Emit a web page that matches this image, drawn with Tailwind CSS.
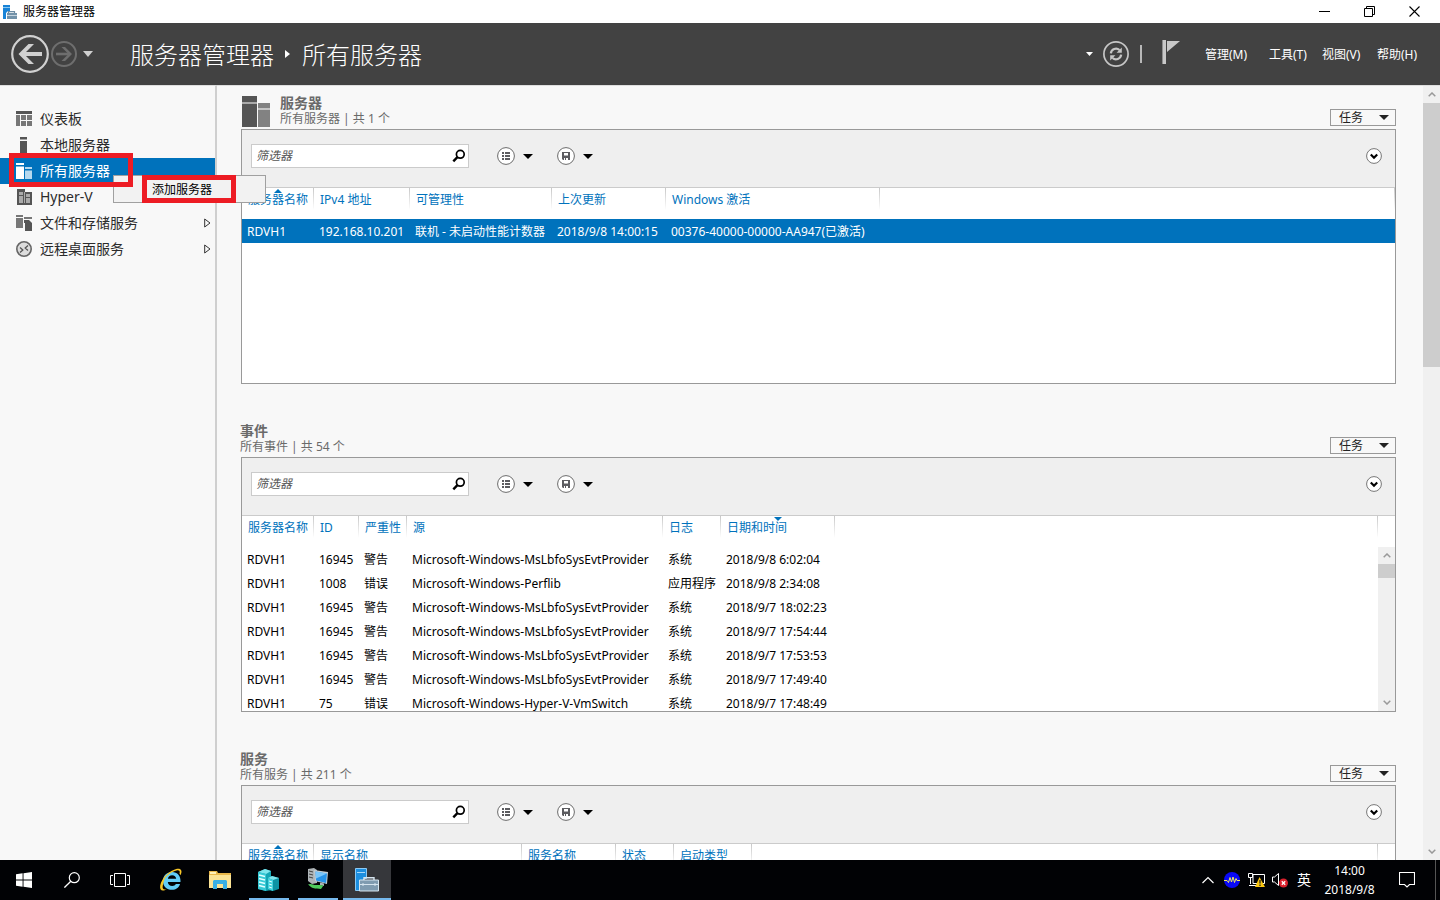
<!DOCTYPE html>
<html lang="zh-CN">
<head>
<meta charset="utf-8">
<title>服务器管理器</title>
<script src="https://cdn.jsdelivr.net/npm/@tailwindcss/browser@4"></script>
</head>
<body class="flex h-screen flex-col overflow-hidden bg-white font-['Noto_Sans','Noto_Sans_CJK_SC',sans-serif] text-xs leading-4 text-black">

<!-- Shared icons -->
<svg class="hidden">
  <symbol id="caret" viewBox="0 0 10 5"><path d="M0 0h10L5 5z" fill="currentColor"/></symbol>
  <symbol id="lens" viewBox="0 0 14 14"><circle cx="8.3" cy="5.3" r="3.9" fill="none" stroke="#000" stroke-width="1.7"/><path d="M5.4 8.2 1.3 12.4" stroke="#000" stroke-width="2.4"/></symbol>
  <symbol id="list" viewBox="0 0 18 18"><circle cx="9" cy="9" r="8.4" fill="#fff" stroke="#6b6b6b"/><path d="M5 5h2v2H5zM8 5h5v2H8zM5 8h2v2H5zM8 8h5v2H8zM5 11h2v2H5zM8 11h5v2H8z" fill="#5c5c60"/></symbol>
  <symbol id="disk" viewBox="0 0 18 18"><circle cx="9" cy="9" r="8.4" fill="#fff" stroke="#6b6b6b"/><path d="M5 5h8v8H6l-1-1z" fill="#5c5c60"/><path d="M7 6h4v2.500H7zM7 11h1v2H7zM9 11h2v2H9z" fill="#fff"/></symbol>
  <symbol id="expand" viewBox="0 0 16 16"><circle cx="8" cy="8" r="7.400" fill="#fff" stroke="#777"/><path d="M4.800 6.500 8 9.700l3.200-3.200" fill="none" stroke="#000" stroke-width="2.200"/></symbol>
  <symbol id="up" viewBox="0 0 8 5"><path d="M.7 4.300 4 1l3.300 3.300" fill="none" stroke="#999" stroke-width="1.500"/></symbol>
  <symbol id="down" viewBox="0 0 8 5"><path d="M.7.7 4 4 7.300.7" fill="none" stroke="#999" stroke-width="1.500"/></symbol>
  <symbol id="manager" viewBox="0 0 24 24"><path d="M.5.500h11v10h-2l-3 3v9h-6z" fill="#1d8fe0" stroke="#8ccaf5"/><path d="M2 4.500h8" stroke="#a9dafb"/><path d="M9 12V9.800h10V12" fill="none" stroke="#d6e4ee" stroke-width="1.400"/><path d="M4.500 12h19v11h-19z" fill="#7f9bb0" stroke="#d6e4ee"/><path d="M5 16.500h18M8 15v3M20 15v3" stroke="#d6e4ee"/></symbol>
</svg>

<header>
  <div class="flex h-[23px] items-center pl-[3px] pr-[3px]">
    <svg class="h-[14px] w-[14px]" viewBox="0 0 14 14"><path d="M0 0h7v6H5L3 8v6H0z" fill="#1883d7"/><path d="M0 2.500h7" stroke="#8cc8f2"/><path d="M5.500 8.500V6.600h6v1.900" fill="none" stroke="#6c8ba3" stroke-width="1.200"/><path d="M4 8h10v6H4z" fill="#7292a9"/><path d="M4 10.500h10" stroke="#c4d3de"/></svg>
    <h1 class="ml-[6px] flex-1">服务器管理器</h1>
    <button aria-label="最小化" class="flex h-[21px] w-[45px] items-center justify-center"><svg class="h-[11px] w-[11px]" viewBox="0 0 11 11"><path d="M0 5.500h11" stroke="#000"/></svg></button>
    <button aria-label="还原" class="flex h-[21px] w-[45px] items-center justify-center"><svg class="h-[11px] w-[11px]" viewBox="0 0 11 11"><path d="M.5 2.500h8v8h-8zM2.500 2V.500h8v8H9" fill="none" stroke="#000"/></svg></button>
    <button aria-label="关闭" class="flex h-[21px] w-[45px] items-center justify-center"><svg class="h-[11px] w-[11px]" viewBox="0 0 11 11"><path d="m.5.500 10 10m0-10-10 10" stroke="#000" stroke-width="1.100"/></svg></button>
  </div>
  <div class="flex h-[62px] items-center bg-[#424242] pl-[11px] pr-[21px] text-white">
    <button aria-label="后退"><svg class="h-[38px] w-[38px]" viewBox="0 0 38 38"><circle cx="19" cy="19" r="17.800" fill="none" stroke="#d0d0d0" stroke-width="2.200"/><path d="M31 19H10" stroke="#d0d0d0" stroke-width="4"/><path d="M23 9h-5.500L7.500 19l10 10H23L13 19z" fill="#d0d0d0"/></svg></button>
    <button aria-label="前进" class="ml-[2px]"><svg class="h-[26px] w-[26px]" viewBox="0 0 26 26"><circle cx="13" cy="13" r="12" fill="none" stroke="#6e6e6e" stroke-width="2"/><path d="M5 13h14" stroke="#6e6e6e" stroke-width="2.600"/><path d="M10.500 6H14l7 7-7 7h-3.500l7-7z" fill="#6e6e6e"/></svg></button>
    <button aria-label="历史记录" class="ml-[6px] text-[#d0d0d0]"><svg class="h-[6px] w-[10px]" viewBox="0 0 10 5" preserveAspectRatio="none"><path d="M0 0h10L5 5z" fill="currentColor"/></svg></button>
    <nav class="ml-[37px] flex flex-1 items-center pt-[2px] text-2xl font-light leading-8">
      <a href="#">服务器管理器</a>
      <svg class="ml-[11px] mr-[12px] mb-[2px] h-[8px] w-[5px]" viewBox="0 0 5 8"><path d="M0 0l5 4-5 4z" fill="#fff"/></svg>
      <span>所有服务器</span>
    </nav>
    <button aria-label="通知列表"><svg class="h-[4px] w-[7px]" viewBox="0 0 7 4"><path d="M0 0h7L3.500 4z" fill="#fff"/></svg></button>
    <button aria-label="刷新" class="ml-[10px]"><svg class="h-[26px] w-[26px]" viewBox="0 0 26 26"><circle cx="13" cy="13" r="12.100" fill="none" stroke="#c6c6c6" stroke-width="1.700"/><path d="M7.800 12.300a5.300 5.300 0 0 1 8.700-3.300M18.200 13.700a5.300 5.300 0 0 1-8.700 3.300" fill="none" stroke="#c6c6c6" stroke-width="2.200"/><path d="M18.800 6.500v5.200h-5.200zM7.200 19.500v-5.200h5.200z" fill="#c6c6c6"/></svg></button>
    <span class="ml-[11px] h-[18px] w-[2px] bg-[#b8b8b8]"></span>
    <button aria-label="通知" class="ml-[20px] mb-[4px]"><svg class="h-[24px] w-[18px]" viewBox="0 0 18 24"><path d="M0 0h4v24H0zM5 1h13L5 12z" fill="#c8c8c8"/><path d="M.5 0v24" stroke="#8e8e8e"/></svg></button>
    <div class="ml-[25px] flex pt-[2px]">
      <button class="w-[64px] text-left">管理(M)</button>
      <button class="w-[53px] text-left">工具(T)</button>
      <button class="w-[55px] text-left">视图(V)</button>
      <button class="w-[42px] whitespace-nowrap text-left">帮助(H)</button>
    </div>
  </div>
</header>

<div class="flex min-h-0 flex-1 bg-[#f8f8f8]">
  <aside class="relative w-[217px] shrink-0 border-r-2 border-t border-r-[#cfcfcf] border-t-[#dedede] pt-[20px] text-sm text-[#2b2b2b]">
    <nav>
      <a href="#" class="flex h-[26px] items-center gap-2 pl-4"><svg class="h-4 w-4" viewBox="0 0 16 16"><path d="M0 0h16v3H0z" fill="#555"/><path d="M0 4h4v11H0zM5 4h5v5H5zM11 4h5v5h-5zM5 10h5v5H5zM11 10h5v5h-5z" fill="#777"/></svg>仪表板</a>
      <a href="#" class="flex h-[26px] items-center gap-2 pl-4"><svg class="h-4 w-4" viewBox="0 0 16 16"><path d="M4 0h7v2.500H4zM4 4h7v12H4z" fill="#555"/></svg>本地服务器</a>
      <a href="#" class="flex h-[26px] items-center gap-2 bg-[#0072bc] pl-4 text-white"><svg class="h-4 w-4" viewBox="0 0 16 16"><path d="M0 0h8v2H0zM0 3.500h8V16H0z" fill="#fff"/><path d="M9 4h7v2H9zM9 7.500h7V16H9z" fill="#b5d8ee"/></svg>所有服务器</a>
      <a href="#" class="flex h-[26px] items-center gap-2 pl-4"><svg class="h-4 w-4" viewBox="0 0 16 16"><path d="M1 0h8v3h7v13H1z" fill="#555"/><path d="M3 3h4v3H3zM3 7h4v7H3zM10 5h4v3h-4zM10 9h4v5h-4zM8 3h1v11H8z" fill="#aaa"/></svg>Hyper-V</a>
      <a href="#" class="flex h-[26px] items-center gap-2 pl-4 pr-[4px]"><svg class="h-4 w-4" viewBox="0 0 16 16"><path d="M0 0h7v2H0zM0 3h7v10H0zM8 2h8v2H8z" fill="#777"/><path d="M8 5h8v11H9V8H8z" fill="#555"/><path d="M13 5h3v3z" fill="#f8f8f8"/></svg><span class="flex-1">文件和存储服务</span><svg class="h-[10px] w-[7px]" viewBox="0 0 7 10"><path d="M.7 1v8L6 5z" fill="none" stroke="#333"/></svg></a>
      <a href="#" class="flex h-[26px] items-center gap-2 pl-4 pr-[4px]"><svg class="h-4 w-4" viewBox="0 0 16 16"><circle cx="8" cy="8" r="7.200" fill="#ddd" stroke="#666" stroke-width="1.600"/><path d="m4 6.500 2.800 2.500L4 11.500M12 4.500 9.200 7l2.800 2.500" fill="none" stroke="#555" stroke-width="1.300"/></svg><span class="flex-1">远程桌面服务</span><svg class="h-[10px] w-[7px]" viewBox="0 0 7 10"><path d="M.7 1v8L6 5z" fill="none" stroke="#333"/></svg></a>
    </nav>
    <!-- Context menu and highlight frames -->
    <div class="absolute left-[113px] top-[89px] z-10 h-[28px] w-[153px] border border-[#a0a0a0] bg-[#f2f2f2] text-xs text-black">
      <button class="flex h-full w-full items-center pl-[38px] pt-[2px]">添加服务器</button>
    </div>
    <div class="pointer-events-none absolute left-[142px] top-[89px] z-20 h-[28px] w-[94px] border-5 border-[#ed1c24]"></div>
    <div class="pointer-events-none absolute left-[9px] top-[67px] z-20 h-[34px] w-[124px] border-5 border-[#ed1c24]"></div>
  </aside>

  <main class="min-w-0 flex-1 overflow-hidden border-t border-[#dedede] pl-6 pr-[27px]">
    <!-- Servers -->
    <section class="mb-[29px]">
      <div class="flex h-[43px] items-end pb-[2px]">
        <svg class="mr-[10px] ml-[1px] h-[31px] w-[28px]" viewBox="0 0 28 31"><path d="M0 0h15v31H0z" fill="#555"/><path d="M0 6h15v2H0z" fill="#aaa"/><path d="M16 7h12v24H16z" fill="#828282"/><path d="M16 12h12v2H16z" fill="#c4c4c4"/></svg>
        <div class="flex-1 text-[#6a6a6a]"><h2 class="text-sm font-bold leading-[17px]">服务器</h2><p>所有服务器 | 共 1 个</p></div>
        <button class="mb-px flex h-[17px] w-[66px] items-center justify-between border border-[#999] pl-[8px] pr-[6px] text-[#222]">任务<svg class="h-[5px] w-[10px]"><use href="#caret"/></svg></button>
      </div>
      <div class="h-[255px] overflow-hidden border border-[#999] bg-white">
        <div class="flex h-[58px] items-start border-b border-[#cbcbcb] bg-[#efefef] pl-[9px] pr-[13px] pt-[14px]">
          <label class="flex h-6 w-[218px] items-center border border-[#cbcbcb] bg-white pl-1 pr-[2px]"><input type="text" aria-label="筛选器" placeholder="筛选器" class="w-full min-w-0 flex-1 italic outline-none placeholder:text-[#555]"><svg class="h-[14px] w-[14px]"><use href="#lens"/></svg></label>
          <div class="ml-[28px] flex h-6 flex-1 items-center">
            <button aria-label="视图选项" class="flex items-center gap-2"><svg class="h-[18px] w-[18px]"><use href="#list"/></svg><svg class="h-[5px] w-[10px]"><use href="#caret"/></svg></button>
            <button aria-label="保存查询" class="ml-6 flex items-center gap-2"><svg class="h-[18px] w-[18px]"><use href="#disk"/></svg><svg class="h-[5px] w-[10px]"><use href="#caret"/></svg></button>
          </div>
          <button aria-label="展开" class="flex h-6 items-center"><svg class="h-4 w-4"><use href="#expand"/></svg></button>
        </div>
        <table class="w-full table-fixed border-collapse whitespace-nowrap text-left">
          <colgroup><col class="w-[72px]"><col class="w-[96px]"><col class="w-[142px]"><col class="w-[114px]"><col class="w-[214px]"><col></colgroup>
          <thead><tr class="h-[31px] align-top text-[#0072bc]">
            <th class="relative bg-linear-to-b from-[#c8c8c8] to-white bg-[length:1px_22px] bg-right-top bg-no-repeat pl-[6px] pt-1 font-normal">服务器名称<svg class="absolute left-[32px] top-[1px] h-[4px] w-[8px]" viewBox="0 0 8 4"><path d="M0 4h8L4 0z" fill="#0072bc"/></svg></th>
            <th class="bg-linear-to-b from-[#c8c8c8] to-white bg-[length:1px_22px] bg-right-top bg-no-repeat pl-[6px] pt-1 font-normal">IPv4 地址</th>
            <th class="bg-linear-to-b from-[#c8c8c8] to-white bg-[length:1px_22px] bg-right-top bg-no-repeat pl-[6px] pt-1 font-normal">可管理性</th>
            <th class="bg-linear-to-b from-[#c8c8c8] to-white bg-[length:1px_22px] bg-right-top bg-no-repeat pl-[6px] pt-1 font-normal">上次更新</th>
            <th class="bg-linear-to-b from-[#c8c8c8] to-white bg-[length:1px_22px] bg-right-top bg-no-repeat pl-[6px] pt-1 font-normal">Windows 激活</th>
            <th class="bg-linear-to-b from-[#c8c8c8] to-white bg-[length:1px_22px] bg-right-top bg-no-repeat"></th>
          </tr></thead>
          <tbody><tr class="h-6 bg-[#0072bc] text-white"><td class="pl-[5px] pt-[2px]">RDVH1</td><td class="pl-[5px] pt-[2px]">192.168.10.201</td><td class="pl-[5px] pt-[2px]">联机 - 未启动性能计数器</td><td class="pl-[5px] pt-[2px]">2018/9/8 14:00:15</td><td class="pl-[5px] pt-[2px]">00376-40000-00000-AA947(已激活)</td><td></td></tr></tbody>
        </table>
      </div>
    </section>

    <!-- Events -->
    <section class="mb-[29px]">
      <div class="flex h-[44px] items-end pb-[2px]">
        <div class="flex-1 text-[#6a6a6a] -ml-[1px]"><h2 class="text-sm font-bold leading-[17px]">事件</h2><p>所有事件 | 共 54 个</p></div>
        <button class="mb-px flex h-[17px] w-[66px] items-center justify-between border border-[#999] pl-[8px] pr-[6px] text-[#222]">任务<svg class="h-[5px] w-[10px]"><use href="#caret"/></svg></button>
      </div>
      <div class="h-[255px] overflow-hidden border border-[#999] bg-white">
        <div class="flex h-[58px] items-start border-b border-[#cbcbcb] bg-[#efefef] pl-[9px] pr-[13px] pt-[14px]">
          <label class="flex h-6 w-[218px] items-center border border-[#cbcbcb] bg-white pl-1 pr-[2px]"><input type="text" aria-label="筛选器" placeholder="筛选器" class="w-full min-w-0 flex-1 italic outline-none placeholder:text-[#555]"><svg class="h-[14px] w-[14px]"><use href="#lens"/></svg></label>
          <div class="ml-[28px] flex h-6 flex-1 items-center">
            <button aria-label="视图选项" class="flex items-center gap-2"><svg class="h-[18px] w-[18px]"><use href="#list"/></svg><svg class="h-[5px] w-[10px]"><use href="#caret"/></svg></button>
            <button aria-label="保存查询" class="ml-6 flex items-center gap-2"><svg class="h-[18px] w-[18px]"><use href="#disk"/></svg><svg class="h-[5px] w-[10px]"><use href="#caret"/></svg></button>
          </div>
          <button aria-label="展开" class="flex h-6 items-center"><svg class="h-4 w-4"><use href="#expand"/></svg></button>
        </div>
        <div class="flex h-[195px] overflow-hidden">
          <div class="min-w-0 flex-1">
            <table class="w-full table-fixed border-collapse whitespace-nowrap text-left">
              <colgroup><col class="w-[72px]"><col class="w-[45px]"><col class="w-[48px]"><col class="w-[256px]"><col class="w-[58px]"><col class="w-[114px]"><col></colgroup>
              <thead><tr class="h-[31px] align-top text-[#0072bc]">
                <th class="bg-linear-to-b from-[#c8c8c8] to-white bg-[length:1px_22px] bg-right-top bg-no-repeat pl-[6px] pt-1 font-normal">服务器名称</th>
                <th class="bg-linear-to-b from-[#c8c8c8] to-white bg-[length:1px_22px] bg-right-top bg-no-repeat pl-[6px] pt-1 font-normal">ID</th>
                <th class="bg-linear-to-b from-[#c8c8c8] to-white bg-[length:1px_22px] bg-right-top bg-no-repeat pl-[6px] pt-1 font-normal">严重性</th>
                <th class="bg-linear-to-b from-[#c8c8c8] to-white bg-[length:1px_22px] bg-right-top bg-no-repeat pl-[6px] pt-1 font-normal">源</th>
                <th class="bg-linear-to-b from-[#c8c8c8] to-white bg-[length:1px_22px] bg-right-top bg-no-repeat pl-[6px] pt-1 font-normal">日志</th>
                <th class="relative bg-linear-to-b from-[#c8c8c8] to-white bg-[length:1px_22px] bg-right-top bg-no-repeat pl-[6px] pt-1 font-normal">日期和时间<svg class="absolute left-[53px] top-[1px] h-[4px] w-[8px]" viewBox="0 0 8 4"><path d="M0 0h8L4 4z" fill="#0072bc"/></svg></th>
                <th class="bg-linear-to-b from-[#c8c8c8] to-white bg-[length:1px_22px] bg-right-top bg-no-repeat"></th>
              </tr></thead>
              <tbody>
                <tr class="h-6"><td class="pl-[5px] pt-[2px]">RDVH1</td><td class="pl-[5px] pt-[2px]">16945</td><td class="pl-[5px] pt-[2px]">警告</td><td class="pl-[5px] pt-[2px]">Microsoft-Windows-MsLbfoSysEvtProvider</td><td class="pl-[5px] pt-[2px]">系统</td><td class="pl-[5px] pt-[2px]">2018/9/8 6:02:04</td><td></td></tr>
                <tr class="h-6"><td class="pl-[5px] pt-[2px]">RDVH1</td><td class="pl-[5px] pt-[2px]">1008</td><td class="pl-[5px] pt-[2px]">错误</td><td class="pl-[5px] pt-[2px]">Microsoft-Windows-Perflib</td><td class="pl-[5px] pt-[2px]">应用程序</td><td class="pl-[5px] pt-[2px]">2018/9/8 2:34:08</td><td></td></tr>
                <tr class="h-6"><td class="pl-[5px] pt-[2px]">RDVH1</td><td class="pl-[5px] pt-[2px]">16945</td><td class="pl-[5px] pt-[2px]">警告</td><td class="pl-[5px] pt-[2px]">Microsoft-Windows-MsLbfoSysEvtProvider</td><td class="pl-[5px] pt-[2px]">系统</td><td class="pl-[5px] pt-[2px]">2018/9/7 18:02:23</td><td></td></tr>
                <tr class="h-6"><td class="pl-[5px] pt-[2px]">RDVH1</td><td class="pl-[5px] pt-[2px]">16945</td><td class="pl-[5px] pt-[2px]">警告</td><td class="pl-[5px] pt-[2px]">Microsoft-Windows-MsLbfoSysEvtProvider</td><td class="pl-[5px] pt-[2px]">系统</td><td class="pl-[5px] pt-[2px]">2018/9/7 17:54:44</td><td></td></tr>
                <tr class="h-6"><td class="pl-[5px] pt-[2px]">RDVH1</td><td class="pl-[5px] pt-[2px]">16945</td><td class="pl-[5px] pt-[2px]">警告</td><td class="pl-[5px] pt-[2px]">Microsoft-Windows-MsLbfoSysEvtProvider</td><td class="pl-[5px] pt-[2px]">系统</td><td class="pl-[5px] pt-[2px]">2018/9/7 17:53:53</td><td></td></tr>
                <tr class="h-6"><td class="pl-[5px] pt-[2px]">RDVH1</td><td class="pl-[5px] pt-[2px]">16945</td><td class="pl-[5px] pt-[2px]">警告</td><td class="pl-[5px] pt-[2px]">Microsoft-Windows-MsLbfoSysEvtProvider</td><td class="pl-[5px] pt-[2px]">系统</td><td class="pl-[5px] pt-[2px]">2018/9/7 17:49:40</td><td></td></tr>
                <tr class="h-6"><td class="pl-[5px] pt-[2px]">RDVH1</td><td class="pl-[5px] pt-[2px]">75</td><td class="pl-[5px] pt-[2px]">错误</td><td class="pl-[5px] pt-[2px]">Microsoft-Windows-Hyper-V-VmSwitch</td><td class="pl-[5px] pt-[2px]">系统</td><td class="pl-[5px] pt-[2px]">2018/9/7 17:48:49</td><td></td></tr>
              </tbody>
            </table>
          </div>
          <div class="mt-[31px] flex w-[17px] flex-col items-center bg-[#f0f0f0]">
            <span class="flex h-[17px] items-center"><svg class="h-[5px] w-[8px]"><use href="#up"/></svg></span>
            <span class="h-[14px] w-full bg-[#cdcdcd]"></span>
            <span class="mt-auto flex h-[17px] items-center"><svg class="h-[5px] w-[8px]"><use href="#down"/></svg></span>
          </div>
        </div>
      </div>
    </section>

    <!-- Services -->
    <section>
      <div class="flex h-[44px] items-end pb-[2px]">
        <div class="flex-1 text-[#6a6a6a] -ml-[1px]"><h2 class="text-sm font-bold leading-[17px]">服务</h2><p>所有服务 | 共 211 个</p></div>
        <button class="mb-px flex h-[17px] w-[66px] items-center justify-between border border-[#999] pl-[8px] pr-[6px] text-[#222]">任务<svg class="h-[5px] w-[10px]"><use href="#caret"/></svg></button>
      </div>
      <div class="h-[255px] overflow-hidden border border-[#999] bg-white">
        <div class="flex h-[58px] items-start border-b border-[#cbcbcb] bg-[#efefef] pl-[9px] pr-[13px] pt-[14px]">
          <label class="flex h-6 w-[218px] items-center border border-[#cbcbcb] bg-white pl-1 pr-[2px]"><input type="text" aria-label="筛选器" placeholder="筛选器" class="w-full min-w-0 flex-1 italic outline-none placeholder:text-[#555]"><svg class="h-[14px] w-[14px]"><use href="#lens"/></svg></label>
          <div class="ml-[28px] flex h-6 flex-1 items-center">
            <button aria-label="视图选项" class="flex items-center gap-2"><svg class="h-[18px] w-[18px]"><use href="#list"/></svg><svg class="h-[5px] w-[10px]"><use href="#caret"/></svg></button>
            <button aria-label="保存查询" class="ml-6 flex items-center gap-2"><svg class="h-[18px] w-[18px]"><use href="#disk"/></svg><svg class="h-[5px] w-[10px]"><use href="#caret"/></svg></button>
          </div>
          <button aria-label="展开" class="flex h-6 items-center"><svg class="h-4 w-4"><use href="#expand"/></svg></button>
        </div>
        <div class="pr-[17px]">
          <table class="w-full table-fixed border-collapse whitespace-nowrap text-left">
            <colgroup><col class="w-[72px]"><col class="w-[208px]"><col class="w-[94px]"><col class="w-[58px]"><col class="w-[78px]"><col></colgroup>
            <thead><tr class="h-[31px] align-top text-[#0072bc]">
              <th class="relative bg-linear-to-b from-[#c8c8c8] to-white bg-[length:1px_22px] bg-right-top bg-no-repeat pl-[6px] pt-1 font-normal">服务器名称<svg class="absolute left-[32px] top-[1px] h-[4px] w-[8px]" viewBox="0 0 8 4"><path d="M0 4h8L4 0z" fill="#0072bc"/></svg></th>
              <th class="bg-linear-to-b from-[#c8c8c8] to-white bg-[length:1px_22px] bg-right-top bg-no-repeat pl-[6px] pt-1 font-normal">显示名称</th>
              <th class="bg-linear-to-b from-[#c8c8c8] to-white bg-[length:1px_22px] bg-right-top bg-no-repeat pl-[6px] pt-1 font-normal">服务名称</th>
              <th class="bg-linear-to-b from-[#c8c8c8] to-white bg-[length:1px_22px] bg-right-top bg-no-repeat pl-[6px] pt-1 font-normal">状态</th>
              <th class="bg-linear-to-b from-[#c8c8c8] to-white bg-[length:1px_22px] bg-right-top bg-no-repeat pl-[6px] pt-1 font-normal">启动类型</th>
              <th class="bg-linear-to-b from-[#c8c8c8] to-white bg-[length:1px_22px] bg-right-top bg-no-repeat"></th>
            </tr></thead>
          </table>
        </div>
      </div>
    </section>
  </main>

  <div class="flex w-[17px] shrink-0 flex-col items-center border-t border-[#dedede] bg-[#f0f0f0]">
    <span class="flex h-[17px] shrink-0 items-center"><svg class="h-[5px] w-[8px]"><use href="#up"/></svg></span>
    <span class="h-[264px] w-full bg-[#cdcdcd]"></span>
    <span class="mt-auto flex h-[17px] shrink-0 items-center"><svg class="h-[5px] w-[8px]"><use href="#down"/></svg></span>
  </div>
</div>

<footer class="relative z-30 flex h-10 shrink-0 bg-[#010205] text-white">
  <button aria-label="开始" class="flex w-12 items-center justify-center"><svg class="h-4 w-4" viewBox="0 0 16 16"><path d="M0 2.300 6.600 1.300v6.200H0zM7.500 1.200 16 0v7.500H7.500zM0 8.500h6.600v6.200L0 13.700zM7.500 8.500H16V16l-8.500-1.200z" fill="#fff"/></svg></button>
  <button aria-label="搜索" class="flex w-12 items-center justify-center"><svg class="h-4 w-4" viewBox="0 0 16 16"><circle cx="10.300" cy="5.700" r="5" fill="none" stroke="#fff" stroke-width="1.200"/><path d="M6.800 9.200.4 15.600" stroke="#fff" stroke-width="1.300"/></svg></button>
  <button aria-label="任务视图" class="mr-[3px] flex w-12 items-center justify-center"><svg class="h-[14px] w-[20px]" viewBox="0 0 20 14"><path d="M4.500.500h11v13h-11zM3 2.500H.500v9H3M17 2.500h2.500v9H17" fill="none" stroke="#fff"/></svg></button>
  <div class="flex gap-px">
    <button aria-label="Internet Explorer" class="flex w-12 items-center justify-center"><svg class="h-6 w-6" viewBox="0 0 24 24"><path d="M21.500 14H8.800c.3 2.600 2 4 4.400 4 1.800 0 3-.7 3.700-2h4.200c-1.200 3.600-4.200 5.800-8.100 5.800-5.300 0-9-3.600-9-8.900s3.800-9 9-9c5.400 0 9 3.900 8.500 10.100zM8.900 10.800h8.300c-.3-2.300-1.800-3.600-4.100-3.600-2.300 0-3.800 1.300-4.200 3.600z" fill="#62cdf7"/><path d="M5.500 11C8 7 13 3.500 17.500 2.500c2.300-.5 4 .3 3 3.300.4.500.7 1 1 1.500C23.800 2.500 22 .2 18 .8 10.500 2.500 2.600 10 1.200 17.500c-.8 4.800 2 6.300 6.600 3.700-3.200 1-4.800-.3-4-3.700.4-2 1-4.400 1.700-6.500z" fill="#f8c728"/></svg></button>
    <button aria-label="文件资源管理器" class="flex w-12 items-center justify-center"><svg class="h-[22px] w-[22px]" viewBox="0 0 22 22"><path d="M0 2h8l1 2h13v15H0z" fill="#e8b74a"/><path d="M0 6h22v13H0z" fill="#fbe395"/><path d="M1 3h6v2H1z" fill="#fff1b8"/><path d="M4 20v-8l1-1h12l1 1v8h-4v-5H8v5z" fill="#39afe3"/></svg></button>
    <button aria-label="服务器" class="flex w-12 flex-col items-center"><svg class="mt-[8px] h-[24px] w-[24px]" viewBox="0 0 24 24"><path d="m1 4 7-3 6 2v19l-5 1-8-2z" fill="#14a6b5"/><path d="m1 4 7-3 6 2-5 3z" fill="#7fe6ed"/><path d="m1 4 8 2v17l-8-2z" fill="#37cad6"/><path d="m2 7 6 1.500M2 10.500 8 12M2 14l6 1.500M2 17.500 8 19" stroke="#e3ffff" stroke-width="1.300"/><path d="m11 10 4-2 7 2v11l-6 2-5-1z" fill="#0d93a3"/><path d="m11 10 4-2 7 2-6 2z" fill="#7fe6ed"/><path d="m11 10 5 2v11l-5-2z" fill="#43d3de"/><path d="m12 13 3 1m-3 2 3 1m-3 2 3 1" stroke="#e3ffff"/></svg><span class="mt-auto h-[2px] w-10 bg-[#76b9ed]"></span></button>
    <button aria-label="远程桌面" class="flex w-12 flex-col items-center"><svg class="mt-[7px] h-[24px] w-[24px]" viewBox="0 0 24 24"><path d="m2 2 6-1 3 2v13l-5 1-4-3z" fill="#aeb4b8"/><path d="m3 4 4 1m-4 2 4 1m-4 2 4 1" stroke="#444"/><path d="m8 3 14 2-1 12-12-3z" fill="#c3cdd3"/><path d="m9.500 4.500 11.500 2-1 9.500-10-2.500z" fill="#2793e8"/><path d="m9.500 4.500 11.500 2-11 5z" fill="#7ac6fa"/><path d="M14 15.500l4 1v2.500l-4-1z" fill="#aeb4b8"/><path d="M2 17.500c3-1.500 5 .5 8 .5s5-.5 7.500.5L15 22c-3-.5-5 0-8-1-2-.5-2.500-1.500-5-3.500z" fill="#4fcb5d"/></svg><span class="mt-auto h-[2px] w-10 bg-[#76b9ed]"></span></button>
    <button aria-label="服务器管理器" class="flex w-12 flex-col items-center bg-[#36373b]"><svg class="mt-[8px] h-[24px] w-[24px]"><use href="#manager"/></svg><span class="mt-auto h-[2px] w-12 bg-[#76b9ed]"></span></button>
  </div>
  <div class="ml-auto flex items-center">
    <button aria-label="显示隐藏的图标" class="flex w-6 justify-center"><svg class="h-[8px] w-[12px]" viewBox="0 0 12 8"><path d="m.5 7 5.500-5.500L11.500 7" fill="none" stroke="#fff" stroke-width="1.200"/></svg></button>
    <button aria-label="音频服务" class="flex w-6 justify-center"><svg class="h-4 w-4" viewBox="0 0 16 16"><circle cx="8" cy="8" r="8" fill="#0909f5"/><path d="M0 8.500h3l1.500 2 1.500-5L7.500 10 9 5l1.500 5.500L12 6.500l1 2h3" fill="none" stroke="#f0e860"/></svg></button>
    <button aria-label="网络" class="flex w-6 justify-center"><svg class="h-[16px] w-[17px]" viewBox="0 0 17 16"><path d="M.500 1.500h4v4h-4zM2.500 6v6M1 13.500h7M5 2.500h11.500v9H5zM4 13.500h8" fill="none" stroke="#fff"/><path d="m11.500 5 5.500 10H7z" fill="#f9c611"/><path d="M12 8v3.500M12 12.500v1.500" stroke="#222" stroke-width="1.300"/></svg></button>
    <button aria-label="音量" class="flex w-6 justify-center"><svg class="h-4 w-4" viewBox="0 0 16 16"><path d="M.5 5h2L6.500 1.500v12L2.500 10h-2z" fill="none" stroke="#fff"/><circle cx="11.500" cy="11" r="4.500" fill="#d9202c"/><path d="m9.800 9.300 3.400 3.400m0-3.400-3.400 3.400" stroke="#fff" stroke-width="1.300"/></svg></button>
    <button class="flex w-6 justify-center text-sm">英</button>
    <div class="w-[67px] text-center leading-[19px]"><p>14:00</p><p>2018/9/8</p></div>
    <button aria-label="通知中心" class="flex w-12 justify-center"><svg class="h-4 w-4" viewBox="0 0 16 16"><path d="M.5.500h15v12h-5L8 15l-2.500-2.500h-5z" fill="none" stroke="#fff" stroke-width="1.100"/></svg></button>
    <span class="ml-1 h-10 w-[5px] border-l border-[#555]"></span>
  </div>
</footer>
</body>
</html>
